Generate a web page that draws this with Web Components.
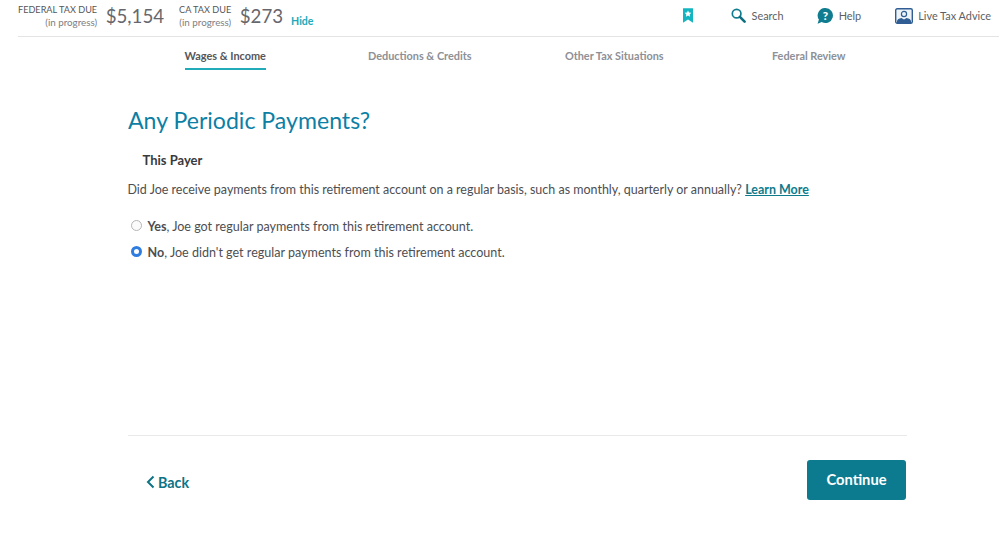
<!DOCTYPE html>
<html lang="en">
  <head>
    <meta charset="UTF-8" />
    <title>Any Periodic Payments?</title>
    <style>
      html, body { margin: 0; background: #fff; }
      body { font-family: "Lato", "Liberation Sans", sans-serif; color: #393a3d; }
    </style>
  </head>
  <body>
    <tax-page>
      <tax-header slot="header"></tax-header>
      <step-nav slot="nav"></step-nav>
      <payment-question slot="main"></payment-question>
      <page-footer slot="footer"></page-footer>
    </tax-page>

    <script>
      function shadow(el, html) {
        el.attachShadow({ mode: "open" }).innerHTML = html;
      }

      customElements.define("tax-page", class extends HTMLElement {
        connectedCallback() {
          shadow(this, `
            <style>
              :host { display: flex; flex-direction: column; width: 999px; height: 552px; overflow: hidden; }
              .main { padding: 0 92px 0 128px; flex: 1; }
            </style>
            <slot name="header"></slot>
            <slot name="nav"></slot>
            <div class="main"><slot name="main"></slot><slot name="footer"></slot></div>`);
        }
      });

      customElements.define("tax-due", class extends HTMLElement {
        connectedCallback() {
          shadow(this, `
            <style>
              :host { display: flex; align-items: center; gap: 8.500px; }
              .label { text-align: right; font-size: 9.150px; line-height: 13px; color: #55565a; }
              .label span { display: block; font-size: 9.800px; color: #7c7e83; }
              .amount { font-size: 18.700px; color: #66676d; }
            </style>
            <div class="label">${this.getAttribute("label")}<span>(in progress)</span></div>
            <div class="amount">${this.getAttribute("amount")}</div>`);
        }
      });

      customElements.define("tax-header", class extends HTMLElement {
        connectedCallback() {
          shadow(this, `
            <style>
              :host { display: flex; align-items: center; height: 36px; margin: 0 0 0 18px; border-bottom: 1px solid #e3e4e6; box-sizing: content-box; }
              .dues { display: flex; align-items: center; gap: 15px; margin-top: -4px; }
              .hide { color: #21abb9; font-size: 10.600px; font-weight: 700; margin: 9px 0 0 -7px; }
              .tools { margin-left: auto; display: flex; align-items: center; margin-right: 8px; margin-top: -5px; font-size: 10.900px; color: #5d5f64; }
              .tool { display: flex; align-items: center; gap: 6px; }
              svg { display: block; }
            </style>
            <div class="dues">
              <tax-due label="FEDERAL TAX DUE" amount="$5,154"></tax-due>
              <tax-due label="CA TAX DUE" amount="$273"></tax-due>
              <span class="hide">Hide</span>
            </div>
            <div class="tools">
              <svg width="10" height="15" viewBox="0 0 11 16" style="margin-right:38px">
                <path d="M0 0H11V16L5.500 12.500 0 16Z" fill="#13b5c1"/>
                <path d="M5.500 2.500l1.100 2.300 2.500.3-1.800 1.700.5 2.500-2.300-1.200-2.300 1.200.5-2.500-1.800-1.700 2.500-.3Z" fill="#fff"/>
              </svg>
              <div class="tool" style="margin-right:33px">
                <svg width="15" height="15" viewBox="0 0 16 16" fill="none">
                  <circle cx="6" cy="6" r="4.600" stroke="#0f7d8f" stroke-width="1.800"/>
                  <path d="M9.500 9.500L14.500 14.500" stroke="#0f6f80" stroke-width="2.800" stroke-linecap="round"/>
                </svg>
                <span>Search</span>
              </div>
              <div class="tool" style="margin-right:34px">
                <svg width="16" height="16" viewBox="0 0 16 16">
                  <path d="M8.500 0A7.500 7.500 0 1 1 4.700 14L.6 15.800 1.900 11.600A7.500 7.500 0 0 1 8.500 0Z" fill="#0f7d8f"/>
                  <text x="8.500" y="11.800" text-anchor="middle" font-family="Lato, sans-serif" font-size="11.500" font-weight="900" fill="#fff">?</text>
                </svg>
                <span>Help</span>
              </div>
              <div class="tool" style="gap:5px">
                <svg width="18" height="16" viewBox="0 0 18 16" fill="none">
                  <rect x=".7" y=".7" width="16.600" height="14.600" rx="1.500" fill="#eef3f8" stroke="#2f5d94" stroke-width="1.400"/>
                  <circle cx="9" cy="6" r="2.600" stroke="#2f5d94" stroke-width="1.200"/>
                  <path d="M2 15V13Q2.500 10.500 6.500 10L9 11.500 11.500 10Q15.500 10.500 16 13V15Z" fill="#2f5d94"/>
                </svg>
                <span>Live Tax Advice</span>
              </div>
            </div>`);
        }
      });

      customElements.define("step-nav", class extends HTMLElement {
        connectedCallback() {
          shadow(this, `
            <style>
              :host { display: grid; grid-template-columns: repeat(4, 194.500px); margin-left: 128px; height: 38px; font-size: 10.900px; font-weight: 700; color: #8d9096; }
              div { display: flex; justify-content: center; padding-top: 12px; }
              span { display: block; height: 19px; }
              .on span { color: #55565a; border-bottom: 2px solid #21abb9; }
            </style>
            <div class="on"><span>Wages &amp; Income</span></div>
            <div><span>Deductions &amp; Credits</span></div>
            <div><span>Other Tax Situations</span></div>
            <div><span>Federal Review</span></div>`);
        }
      });

      customElements.define("radio-row", class extends HTMLElement {
        connectedCallback() {
          const on = this.hasAttribute("checked");
          shadow(this, `
            <style>
              :host { display: flex; align-items: center; gap: 5.500px; height: 26px; margin-left: 3px; font-size: 12.560px; color: #4d4e52; }
              i { display: block; box-sizing: border-box; width: 11px; height: 11px; border-radius: 50%; margin-top: -1px;
                  border: ${on ? "3.500px solid #2f7de1" : "1px solid #b5b6b9"}; background: ${on ? "#fff" : "#fbfbfb"}; }
              span { padding-top: 1px; }
              b { color: #393a3d; }
            </style>
            <i></i><span><slot></slot></span>`);
        }
      });

      customElements.define("payment-question", class extends HTMLElement {
        connectedCallback() {
          shadow(this, `
            <style>
              :host { display: block; height: 360px; }
              h1 { margin: 0; padding-top: 29px; font-size: 23.100px; line-height: 32px; font-weight: 400; color: #0d7fa5; }
              h2 { margin: 15px 0 0 14.500px; font-size: 13px; line-height: 18px; font-weight: 700; color: #393a3d; }
              p { margin: 12px 0 14px -.5px; font-size: 12.470px; line-height: 18px; color: #4d4e52; white-space: nowrap; }
              a { color: #0d7b8c; font-weight: 700; text-decoration: underline; }
            </style>
            <h1>Any Periodic Payments?</h1>
            <h2>This Payer</h2>
            <p>Did Joe receive payments from this retirement account on a regular basis, such as monthly, quarterly or annually? <a>Learn More</a></p>
            <radio-row><b>Yes</b>, Joe got regular payments from this retirement account.</radio-row>
            <radio-row checked><b>No</b>, Joe didn't get regular payments from this retirement account.</radio-row>`);
        }
      });

      customElements.define("page-footer", class extends HTMLElement {
        connectedCallback() {
          shadow(this, `
            <style>
              :host { display: flex; align-items: center; justify-content: space-between; border-top: 1px solid #e8e9ea; padding-top: 24px; }
              .back { display: flex; align-items: center; gap: 3px; margin: 4px 0 0 18px; color: #0d7385; font-size: 14.300px; font-weight: 700; }
              .go { width: 99px; height: 40px; margin-right: 1px; border-radius: 3px; background: #0d7b8f; color: #fff; font-size: 14.700px; font-weight: 700; display: flex; align-items: center; justify-content: center; padding-bottom: 2px; box-sizing: border-box; }
            </style>
            <div class="back">
              <svg width="9" height="14" viewBox="0 0 9 14" fill="none"><path d="M7.500 1.500L2 7l5.500 5.500" stroke="#0d7385" stroke-width="2"/></svg>
              <span>Back</span>
            </div>
            <div class="go">Continue</div>`);
        }
      });
    </script>
  </body>
</html>
